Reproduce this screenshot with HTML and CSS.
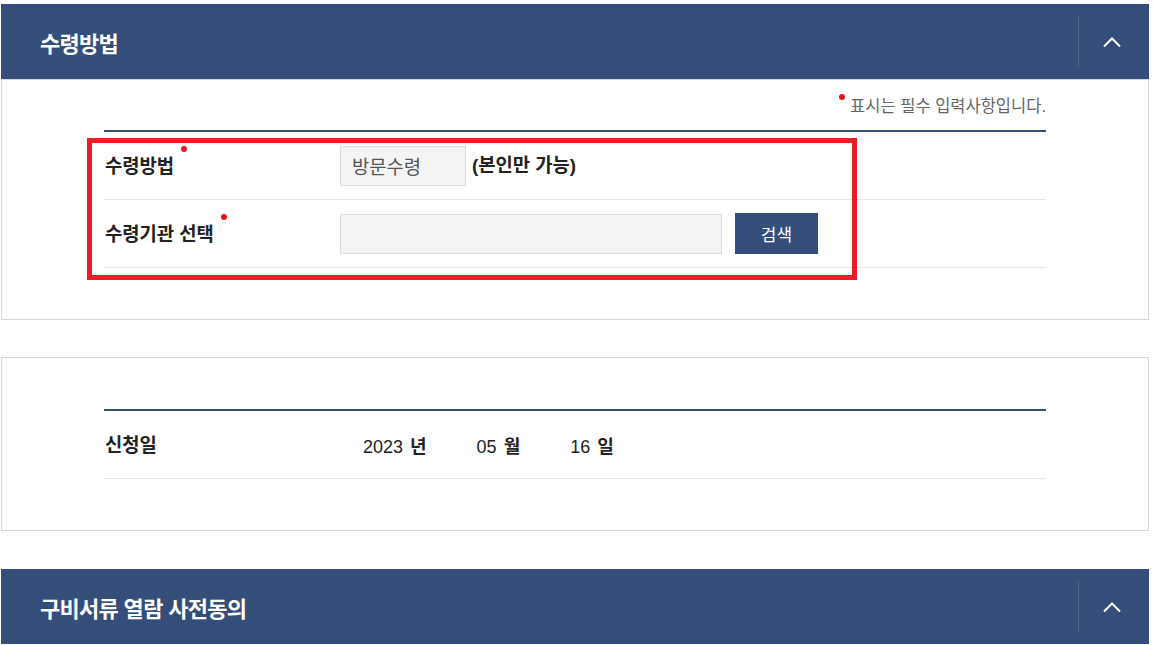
FILE: index.html
```html
<!DOCTYPE html>
<html lang="ko">
<head>
    <meta charset="UTF-8">
    <meta name="viewport" content="width=device-width, initial-scale=1.0">
    <title>수령방법</title>
    <link rel="stylesheet" href="styles.css">
</head>
<body>
    <div class="wrap">
        <section class="panel">
            <div class="panel-head">
                <h2>수령방법</h2>
                <button class="toggle" type="button">
                    <svg width="18" height="12" viewBox="0 0 18 12"><polyline points="1,10.5 9,2.5 17,10.5" fill="none" stroke="#fff" stroke-width="2"/></svg>
                </button>
            </div>
            <div class="panel-body">
                <p class="req-note"><span class="req-dot"></span>표시는 필수 입력사항입니다.</p>
                <div class="form-table">
                    <div class="form-row">
                        <div class="form-label"><span class="req">수령방법</span></div>
                        <div class="form-value">
                            <span class="field field-short">방문수령</span>
                            <strong class="field-note">(본인만 가능)</strong>
                        </div>
                    </div>
                    <div class="form-row">
                        <div class="form-label"><span class="req">수령기관 선택</span></div>
                        <div class="form-value">
                            <input class="field field-long" type="text">
                            <button class="btn-search" type="button">검색</button>
                        </div>
                    </div>
                </div>
                <div class="highlight"></div>
            </div>
        </section>

        <section class="panel panel-plain">
            <div class="panel-body panel-body-top">
                <div class="form-table">
                    <div class="form-row">
                        <div class="form-label">신청일</div>
                        <div class="form-value date-value">
                            <span class="date-part">2023<b>년</b></span>
                            <span class="date-part">05<b>월</b></span>
                            <span class="date-part">16<b>일</b></span>
                        </div>
                    </div>
                </div>
            </div>
        </section>

        <section class="panel panel-last">
            <div class="panel-head">
                <h2>구비서류 열람 사전동의</h2>
                <button class="toggle" type="button">
                    <svg width="18" height="12" viewBox="0 0 18 12"><polyline points="1,10.5 9,2.5 17,10.5" fill="none" stroke="#fff" stroke-width="2"/></svg>
                </button>
            </div>
        </section>
    </div>
</body>
</html>
```

FILE: styles.css
```css
body {
    margin: 0;
    padding: 4px 0 0 1px;
    font-family: "Liberation Sans", "Noto Sans CJK KR", sans-serif;
    color: #222;
    background-color: #fff;
}
.wrap {
    width: 1148px;
}
.panel-head {
    display: flex;
    align-items: center;
    height: 75px;
    background-color: #344d79;
}
.panel-head h2 {
    flex: 1;
    margin: 0;
    padding-left: 39px;
    color: #fff;
    font-family: "Noto Sans CJK KR", sans-serif;
    font-size: 22px;
    font-weight: 700;
    letter-spacing: -0.7px;
    line-height: 1;
}
.toggle {
    display: flex;
    align-items: center;
    justify-content: center;
    width: 71px;
    height: 51px;
    padding: 0 4px 0 0;
    border: none;
    border-left: 1px solid rgba(255, 255, 255, 0.14);
    background: none;
    cursor: pointer;
}
.panel-body {
    position: relative;
    border: 1px solid #d6d6d6;
    padding: 0 102px 51px;
}
.panel-plain {
    margin-top: 37px;
}
.panel-body-top {
    padding-top: 51px;
}
.panel-last {
    margin-top: 38px;
}
.req-note {
    display: flex;
    justify-content: flex-end;
    align-items: center;
    height: 50px;
    margin: 0;
    font-size: 16.5px;
    color: #666;
}
.req-dot {
    width: 6px;
    height: 6px;
    margin-right: 5px;
    border-radius: 50%;
    background-color: #e8141c;
    position: relative;
    top: -8px;
}
.form-table {
    border-top: 2px solid #344d79;
}
.form-row {
    display: flex;
    align-items: center;
    height: 67px;
    border-bottom: 1px solid #e7e7e7;
}
.form-label {
    box-sizing: border-box;
    width: 236px;
    padding: 3px 0 0 1px;
    font-size: 18.8px;
    font-weight: 700;
    line-height: 1;
}
.req {
    position: relative;
}
.req::after {
    content: "";
    position: absolute;
    right: -13px;
    top: -10px;
    width: 6px;
    height: 6px;
    border-radius: 50%;
    background-color: #e8141c;
}
.form-value {
    display: flex;
    align-items: center;
}
.field {
    box-sizing: border-box;
    height: 40px;
    border: 1px solid #dcdcdc;
    background-color: #f4f4f4;
    font-family: inherit;
}
.field-short {
    display: flex;
    align-items: center;
    width: 126px;
    padding-left: 11px;
    font-size: 18.8px;
    color: #555;
}
.field-note {
    margin: -4px 0 0 6px;
    font-size: 18.8px;
    font-weight: 700;
}
.field-long {
    width: 382px;
    padding: 0 10px;
    outline: none;
}
.btn-search {
    width: 83px;
    height: 41px;
    margin-left: 13px;
    border: none;
    background-color: #344d79;
    color: #fff;
    font-family: inherit;
    font-size: 17px;
    cursor: pointer;
}
.date-value {
    padding-left: 23px;
    font-size: 18px;
}
.date-part {
    margin-right: 50px;
}
.date-part b {
    margin-left: 7px;
    font-weight: 700;
}
.highlight {
    position: absolute;
    left: 85px;
    top: 58px;
    box-sizing: border-box;
    width: 770px;
    height: 142px;
    border: 5px solid #ec1c24;
    pointer-events: none;
}
```
